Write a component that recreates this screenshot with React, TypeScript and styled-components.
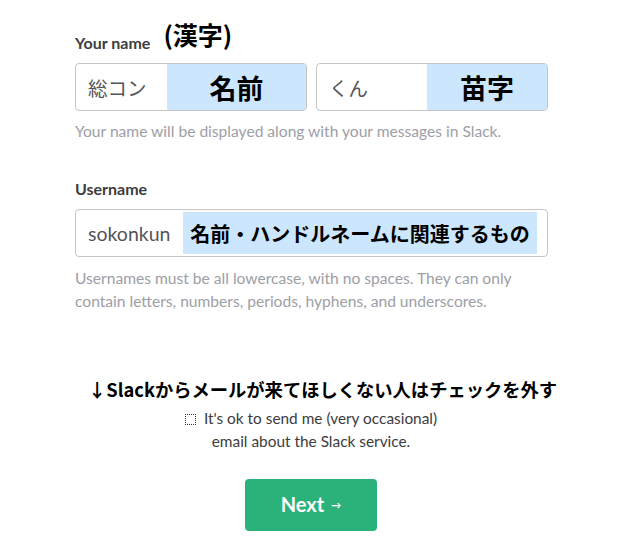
import React from 'react';
import styled, { createGlobalStyle } from 'styled-components';

const GlobalStyle = createGlobalStyle`
  body {
    margin: 0;
    background: #ffffff;
    font-family: Lato, 'Noto Sans CJK JP', sans-serif;
  }
`;

const Page = styled.div`
  width: 622px;
  height: 560px;
  box-sizing: border-box;
  padding: 23px 0 0 75px;
`;

const Form = styled.div`
  width: 473px;
`;

const LabelRow = styled.div`
  display: flex;
  align-items: flex-end;
  height: 30px;
  margin-bottom: 10px;
`;

const Label = styled.div`
  font-family: Lato, sans-serif;
  font-weight: 700;
  font-size: 16px;
  line-height: 20px;
  color: #3d3c40;
`;

const Note = styled.div`
  font-family: 'Noto Sans CJK JP', sans-serif;
  font-weight: 700;
  font-size: 25px;
  line-height: 30px;
  color: #000;
  margin-left: 13px;
  position: relative;
  top: -4px;
`;

const Row = styled.div`
  display: flex;
  gap: 9px;
`;

const Field = styled.div<{ $pad?: number }>`
  flex: 1;
  display: flex;
  align-items: stretch;
  height: 48px;
  box-sizing: border-box;
  border: 1px solid #c5c5c5;
  border-radius: 4px;
  padding: ${({ $pad }) => ($pad ? `${$pad}px ${$pad + 8}px ${$pad}px 0` : '0')};
  overflow: hidden;
`;

const Value = styled.div<{ $w: number }>`
  display: flex;
  align-items: center;
  box-sizing: border-box;
  padding-left: 12px;
  width: ${({ $w }) => $w}px;
  flex-shrink: 0;
  font-family: Lato, 'Noto Sans CJK JP', sans-serif;
  font-size: 19.5px;
  color: #555459;
`;

const Mark = styled.div<{ $size: number }>`
  flex: 1;
  display: flex;
  align-items: center;
  justify-content: center;
  background: #cbe6fd;
  font-family: 'Noto Sans CJK JP', sans-serif;
  font-weight: 700;
  font-size: ${({ $size }) => $size}px;
  color: #000;
  white-space: nowrap;
`;

const Hint = styled.div<{ $top: number }>`
  margin-top: ${({ $top }) => $top}px;
  font-family: Lato, sans-serif;
  font-size: 15.6px;
  line-height: 23px;
  color: #9e9ea6;
`;

const Section = styled.div`
  margin-top: 26px;
`;

const Notice = styled.div`
  margin: 63px 0 0 13px;
  font-family: 'Noto Sans CJK JP', sans-serif;
  font-weight: 700;
  font-size: 18.3px;
  line-height: 26px;
  color: #000;
  white-space: nowrap;
`;

const Consent = styled.label`
  display: block;
  width: 622px;
  margin: 5px 0 0 -75px;
  text-align: center;
  font-family: Lato, sans-serif;
  font-size: 15.4px;
  line-height: 23px;
  color: #3d3c40;
`;

const Box = styled.span`
  display: inline-block;
  width: 9px;
  height: 9px;
  border: 1px dotted #333;
  margin-right: 8px;
  vertical-align: -1px;
`;

const ButtonWrap = styled.div`
  width: 622px;
  margin: 26px 0 0 -75px;
  display: flex;
  justify-content: center;
`;

const NextButton = styled.button`
  width: 132px;
  height: 52px;
  border: none;
  border-radius: 4px;
  background: #2bb27b;
  color: #fff;
  font-family: Lato, sans-serif;
  font-weight: 700;
  font-size: 20px;
  display: flex;
  align-items: center;
  justify-content: center;
  gap: 7px;
  padding: 0 0 2px;
`;

const Arrow = styled.span`
  font-size: 10px;
  padding-top: 2px;
`;

export default function App() {
  return (
    <>
      <GlobalStyle />
      <Page>
        <Form>
          <LabelRow>
            <Label>Your name</Label>
            <Note>(漢字)</Note>
          </LabelRow>
          <Row>
            <Field>
              <Value $w={91}>総コン</Value>
              <Mark $size={27}>名前</Mark>
            </Field>
            <Field>
              <Value $w={110}>くん</Value>
              <Mark $size={27}>苗字</Mark>
            </Field>
          </Row>
          <Hint $top={9}>Your name will be displayed along with your messages in Slack.</Hint>

          <Section>
            <LabelRow>
              <Label>Username</Label>
            </LabelRow>
            <Field $pad={2}>
              <Value $w={107}>sokonkun</Value>
              <Mark $size={20}>名前・ハンドルネームに関連するもの</Mark>
            </Field>
            <Hint $top={10}>
              Usernames must be all lowercase, with no spaces. They can only
              <br />
              contain letters, numbers, periods, hyphens, and underscores.
            </Hint>
          </Section>

          <Notice>↓Slackからメールが来てほしくない人はチェックを外す</Notice>
          <Consent>
            <Box />
            It's ok to send me (very occasional)
            <br />
            email about the Slack service.
          </Consent>
          <ButtonWrap>
            <NextButton>
              <span>Next</span>
              <Arrow>→</Arrow>
            </NextButton>
          </ButtonWrap>
        </Form>
      </Page>
    </>
  );
}
